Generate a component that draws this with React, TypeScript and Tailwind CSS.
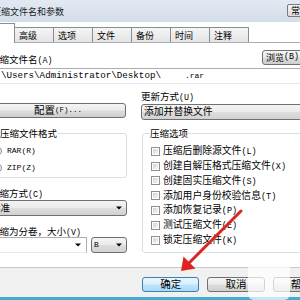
import React from "react";

const CJK = "font-['Noto_Sans_CJK_SC',sans-serif]";
const BTN =
  "flex items-center justify-center border border-[#707070] rounded-[3px] bg-[linear-gradient(#f4f4f4_0%,#ebebeb_48%,#dddddd_52%,#cfcfcf_100%)]";
const DROP =
  "flex items-center justify-between border border-[#707070] rounded-[3px] bg-[linear-gradient(#f4f4f4_0%,#ebebeb_48%,#dddddd_52%,#d2d2d2_100%)]";

function T({ s, latin = "text-[8.3px]" }: { s: string; latin?: string }) {
  const parts = s.split(/([\x20-\x7e]+)/).filter((p) => p.length > 0);
  return (
    <>
      {parts.map((p, i) =>
        /^[\x20-\x7e]+$/.test(p) ? (
          <span key={i} className={`font-mono ${latin}`}>
            {p}
          </span>
        ) : (
          <span key={i}>{p}</span>
        )
      )}
    </>
  );
}

function Tri() {
  return (
    <svg width="6" height="4" viewBox="0 0 6 4" className="shrink-0">
      <path d="M0 0.5H6L3 3.5Z" fill="#000" />
    </svg>
  );
}

function Check({ label }: { label: string }) {
  return (
    <div className="h-[14.8px] flex items-center gap-[3px]">
      <span className="w-[9px] h-[9px] border border-[#8e8f8f] bg-white p-px shrink-0 flex">
        <span className="flex-1 bg-[linear-gradient(135deg,#cfd2d6,#f7f7f7)]" />
      </span>
      <span className="text-[9.8px] leading-none whitespace-nowrap">
        <T s={label} latin="text-[8.5px]" />
      </span>
    </div>
  );
}

function Radio({ label, on }: { label: string; on?: boolean }) {
  return (
    <div className="h-[10px] flex items-center gap-[5px] pl-[1px]">
      <span className="w-[10px] h-[10px] rounded-full border border-[#8e8f8f] bg-[linear-gradient(135deg,#d4d6d9,#fafafa)] shrink-0 flex items-center justify-center">
        {on ? (
          <span className="w-[5px] h-[5px] rounded-full bg-[radial-gradient(circle_at_40%_35%,#9fd0ff,#1f6fcf_70%,#1a4f90)]" />
        ) : null}
      </span>
      <span className="font-mono text-[8px] leading-none">{label}</span>
    </div>
  );
}

const TABS = ["高级", "选项", "文件", "备份", "时间", "注释"];
const OPTS = [
  "压缩后删除源文件(L)",
  "创建自解压格式压缩文件(X)",
  "创建固实压缩文件(S)",
  "添加用户身份校验信息(T)",
  "添加恢复记录(P)",
  "测试压缩文件(E)",
  "锁定压缩文件(K)",
];

export default function App() {
  return (
    <div className={`relative w-[300px] h-[300px] overflow-hidden bg-white text-black ${CJK}`}>
      <div className="-ml-[10px] w-[340px] flex flex-col">
        {/* title bar */}
        <div className="h-[22px] flex items-start bg-[linear-gradient(#e2e9f2,#d3dde9)]">
          <div className="w-[297px] pl-[2px] pt-[7px] text-[9px] leading-none text-[#1b1b1b]">
            压缩文件名和参数
          </div>
          <div className="mt-[4px] h-[13px] w-[40px] border border-[#7a7a7a] rounded-[2px] bg-[linear-gradient(#f4f4f4,#dcdcdc)] overflow-hidden pl-[3px] text-[9px] leading-[12px]">
            常规
          </div>
        </div>

        {/* tab strip */}
        <div className="h-[20px] flex items-end bg-white">
          <div className="relative z-10 -mb-px w-[25px] h-[20px] bg-white border-t border-r border-[#898c95]" />
          {TABS.map((t) => (
            <div
              key={t}
              className="w-[39px] h-[15px] flex items-center pl-[4px] border-t border-r border-[#898c95] bg-[linear-gradient(#f5f5f5,#e4e4e4)] text-[9px] leading-none"
            >
              {t}
            </div>
          ))}
        </div>

        {/* panel */}
        <div className="border-t border-b border-t-[#a9acb3] border-b-[#c9c9c9] bg-white pt-[7px] pb-[14px]">
          <div className="h-[16px] flex items-end">
            <div className="w-[272px] text-[9.5px] leading-[10px]">
              <T s="压缩文件名(A)" />
            </div>
            <div className={`${BTN} h-[15px] w-[60px] self-start justify-start pl-[3px] text-[9px] leading-none`}>
              <T s="浏览(B)..." />
            </div>
          </div>

          <div className="mt-[2px] h-[16px] flex items-center border-t border-t-[#abadb3] border-b border-b-[#e3e9ef] font-mono text-[9.2px] leading-none whitespace-nowrap">
            <span>C:\Users\Administrator\Desktop\</span>
            <span className="ml-[24px] text-[8px]">.rar</span>
          </div>

          <div className="flex">
            {/* left column */}
            <div className="w-[137px] flex flex-col">
              <div className={`${BTN} mt-[19px] h-[15px] w-[136px] text-[10.5px] leading-none`}>
                <T s="配置(F)..." latin="text-[7.5px]" />
              </div>

              <fieldset className="mt-[10px] border border-[#d5dfe5] rounded-[3px] pb-[4px]">
                <legend className="ml-[9px] text-[9.5px] leading-[10px]">压缩文件格式</legend>
                <div className="mt-[8px] flex flex-col gap-[7px]">
                  <Radio label="RAR(R)" on />
                  <Radio label="ZIP(Z)" />
                </div>
              </fieldset>

              <div className="mt-[10px] h-[10px] text-[9.5px] leading-[10px]">
                <T s="压缩方式(C)" />
              </div>
              <div className={`${DROP} mt-[2px] h-[16px] w-[137px] pr-[4px] text-[9.5px] leading-none`}>
                <span>标准</span>
                <Tri />
              </div>

              <div className="mt-[10px] h-[10px] text-[9.5px] leading-[10px] whitespace-nowrap">
                <T s="压缩为分卷，大小(V)" />
              </div>
              <div className="mt-[1px] flex gap-[4px]">
                <div className="h-[16px] w-[97px] flex items-center justify-end pr-[5px] bg-white border border-[#abadb3] border-b-[#e3e9ef]">
                  <Tri />
                </div>
                <div className={`${DROP} h-[16px] w-[36px] pl-[2px] pr-[4px] leading-none`}>
                  <span className="font-mono text-[8px]">B</span>
                  <Tri />
                </div>
              </div>
            </div>

            {/* right column */}
            <div className="ml-[14px] w-[175px] flex flex-col">
              <div className="mt-[7px] h-[10px] text-[9.5px] leading-[10px]">
                <T s="更新方式(U)" />
              </div>
              <div className={`${DROP} mt-[3px] h-[16px] pl-[2px] pr-[4px] text-[9.8px] leading-none`}>
                <span>添加并替换文件</span>
                <Tri />
              </div>

              <fieldset className="mt-[8px] ml-[1px] border border-[#d5dfe5] rounded-[3px] pb-[4px]">
                <legend className="ml-[7px] text-[9.5px] leading-[10px]">压缩选项</legend>
                <div className="mt-[6px] pl-[8px] flex flex-col">
                  {OPTS.map((o) => (
                    <Check key={o} label={o} />
                  ))}
                </div>
              </fieldset>
            </div>
          </div>
        </div>

        {/* bottom buttons */}
        <div className="h-[29px] bg-[#f0f0f0] pt-[9px] pl-[152px] flex items-start gap-[8px]">
          <div className="h-[15px] w-[59px] flex items-center justify-center rounded-[3px] border border-[#3c7fb1] bg-[linear-gradient(#eaf6fd_0%,#d9f0fc_48%,#bee6fd_52%,#a7d9f5_100%)] text-[10.5px] leading-none">
            确定
          </div>
          <div className={`${BTN} h-[15px] w-[59px] text-[10.5px] leading-none`}>取消</div>
          <div className={`${BTN} h-[15px] w-[59px] text-[10.5px] leading-none`}>帮助</div>
        </div>
        <div className="h-[3px] bg-[#45abd1]" />
      </div>

      {/* watermark blob */}
      <div className="absolute left-[248px] top-[254px] w-[42px] h-[46px] rounded-[6px] bg-white/70" />

      {/* red arrow */}
      <svg className="absolute inset-0 pointer-events-none" width="300" height="300" viewBox="0 0 300 300">
        <line x1="241" y1="211" x2="189" y2="263" stroke="#dd2420" strokeWidth="3" strokeLinecap="round" />
        <polygon points="181,271 183.5,256.5 195.5,268.5" fill="#dd2420" />
      </svg>
    </div>
  );
}
